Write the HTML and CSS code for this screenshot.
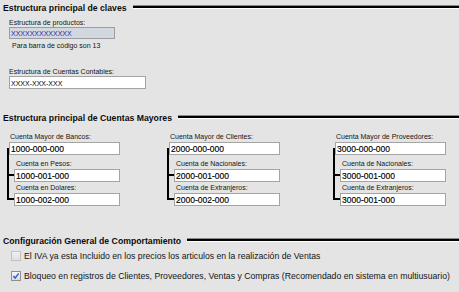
FILE: index.html
```html
<!DOCTYPE html>
<html lang="es">
<head>
<meta charset="utf-8">
<title>Estructura</title>
<link rel="stylesheet" href="styles.css">
</head>
<body>
<div class="page">
  <section class="sec">
    <div class="head"><span class="head-text">Estructura principal de claves</span><span class="rule"></span></div>
    <div class="fields">
      <div class="lbl lbl-prod">Estructura de productos:</div>
      <div class="box box-prod">XXXXXXXXXXXXX</div>
      <div class="hint">Para barra de código son 13</div>
      <div class="lbl lbl-cont">Estructura de Cuentas Contables:</div>
      <div class="box box-cont">XXXX-XXX-XXX</div>
    </div>
  </section>

  <section class="sec sec2">
    <div class="head"><span class="head-text">Estructura principal de Cuentas Mayores</span><span class="rule"></span></div>
    <div class="cols">
      <div class="col">
        <div class="lbl col-label">Cuenta Mayor de Bancos:</div>
        <div class="tree">
          <div class="box box-main">1000-000-000</div>
          <div class="lbl sub-label">Cuenta en Pesos:</div>
          <div class="box box-sub">1000-001-000</div>
          <div class="lbl sub-label sub-label2">Cuenta en Dolares:</div>
          <div class="box box-sub">1000-002-000</div>
        </div>
      </div>
      <div class="col">
        <div class="lbl col-label">Cuenta Mayor de Clientes:</div>
        <div class="tree">
          <div class="box box-main">2000-000-000</div>
          <div class="lbl sub-label">Cuenta de Nacionales:</div>
          <div class="box box-sub">2000-001-000</div>
          <div class="lbl sub-label sub-label2">Cuenta de Extranjeros:</div>
          <div class="box box-sub">2000-002-000</div>
        </div>
      </div>
      <div class="col">
        <div class="lbl col-label">Cuenta Mayor de Proveedores:</div>
        <div class="tree">
          <div class="box box-main">3000-000-000</div>
          <div class="lbl sub-label">Cuenta de Nacionales:</div>
          <div class="box box-sub">3000-001-000</div>
          <div class="lbl sub-label sub-label2">Cuenta de Extranjeros:</div>
          <div class="box box-sub">3000-001-000</div>
        </div>
      </div>
    </div>
  </section>

  <section class="sec sec3">
    <div class="head"><span class="head-text">Configuración General de Comportamiento</span><span class="rule"></span></div>
    <div class="checks">
      <div class="chk-row">
        <span class="cb cb-off"></span>
        <span class="chk-text">El IVA ya esta Incluido en los precios los articulos en la realización de Ventas</span>
      </div>
      <div class="chk-row chk-row2">
        <span class="cb cb-on"><svg viewBox="0 0 8 8" width="8" height="8"><path d="M1.4 4.1 L3.1 6.1 L6.7 1.4" fill="none" stroke="#2f5fd0" stroke-width="1.5"/></svg></span>
        <span class="chk-text">Bloqueo en registros de Clientes, Proveedores, Ventas y Compras (Recomendado en sistema en multiusuario)</span>
      </div>
    </div>
  </section>
</div>
</body>
</html>
```
FILE: styles.css
```css
html, body {
  margin: 0;
  padding: 0;
}
body {
  width: 459px;
  height: 292px;
  overflow: hidden;
  background: #e4e4e4;
  font-family: "Liberation Sans", Arial, sans-serif;
  color: #1c1c1c;
}
.page {
  padding: 1px 0 0 3px;
}
.head {
  display: flex;
  align-items: flex-start;
  height: 14px;
}
.head-text {
  font-weight: bold;
  font-size: 8.7px;
  line-height: 14px;
  color: #0c0c0c;
  white-space: nowrap;
}
.rule {
  flex: 1;
  margin-left: 6px;
  margin-top: 4px;
  height: 2px;
  background: #000;
  border-top: 1px solid #8a8a8a;
  border-bottom: 1px solid #fff;
}
.fields {
  margin-left: 6px;
}
.lbl {
  font-size: 7px;
  line-height: 8px;
  white-space: nowrap;
  color: #141414;
}
.lbl-prod {
  margin-top: 4px;
}
.box {
  box-sizing: border-box;
  border: 1px solid #a4a4a4;
  background: #fff;
  white-space: nowrap;
  overflow: hidden;
  color: #000;
}
.box-prod {
  width: 106px;
  height: 12px;
  font-size: 7px;
  line-height: 10px;
  padding: 1px 0 0 1px;
  background: #d3d7df;
  border-color: #9b9da3;
  color: #2a2aa6;
}
.hint {
  margin: 2px 0 0 3px;
  font-size: 7px;
  line-height: 9px;
  white-space: nowrap;
  color: #141414;
}
.lbl-cont {
  margin-top: 18px;
}
.box-cont {
  width: 137px;
  height: 13px;
  font-size: 7px;
  line-height: 10px;
  padding: 2px 0 0 1px;
}
.sec2 .head {
  margin-top: 22px;
}
.cols {
  display: grid;
  grid-template-columns: 160px 166px 113px;
  margin: 8px 0 0 4px;
}
.col-label {
  margin-left: 3px;
}
.tree {
  position: relative;
  margin-top: 1px;
}
.tree::before {
  content: "";
  position: absolute;
  left: 0;
  top: 6px;
  bottom: 6px;
  width: 2px;
  background: #000;
}
.box-main, .box-sub {
  height: 13px;
  font-size: 8.5px;
  line-height: 11px;
  padding: 1px 0 0 1px;
  -webkit-text-stroke: 0.15px #000;
}
.box-main {
  margin-left: 2px;
  width: 111px;
}
.sub-label {
  margin: 5px 0 1px 9px;
}
.sub-label2 {
  margin-top: 2px;
}
.box-sub {
  position: relative;
  overflow: visible;
  margin-left: 7px;
  width: 106px;
}
.box-sub::before {
  content: "";
  position: absolute;
  left: -8px;
  top: 4px;
  width: 7px;
  height: 2px;
  background: #000;
}
.sec3 .head {
  margin-top: 28px;
}
.checks {
  margin-left: 8px;
}
.chk-row {
  display: flex;
  align-items: center;
  height: 12px;
  margin-top: 2px;
  font-size: 8.7px;
  line-height: 12px;
  white-space: nowrap;
  color: #141414;
}
.chk-row2 {
  margin-top: 8px;
}
.cb {
  box-sizing: border-box;
  width: 10px;
  height: 10px;
  margin-right: 3px;
  border: 1px solid #8e8f90;
  background: linear-gradient(#f6f6f6, #dadada);
  display: flex;
  align-items: center;
  justify-content: center;
  flex: none;
}
.cb-off {
  border-color: #c2c2c2;
  background: linear-gradient(#efefef, #e0e0e0);
}
.cb svg {
  display: block;
}
```
